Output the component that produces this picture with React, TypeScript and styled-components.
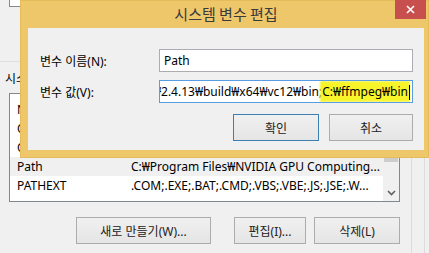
import React from "react"
import styled, { createGlobalStyle } from "styled-components"

const GlobalStyle = createGlobalStyle`
  html, body {
    margin: 0;
    padding: 0;
    background: #f0f0f0;
    overflow: hidden;
  }
  body {
    font-family: "Noto Sans", "Noto Sans CJK KR", sans-serif;
    font-size: 12px;
    color: #000;
  }
`

const Screen = styled.div`
  position: relative;
  width: 429px;
  height: 253px;
  overflow: hidden;
  display: flex;
  background: #f0f0f0;
`

const Window = styled.div`
  width: 412px;
  flex-shrink: 0;
  box-sizing: border-box;
  border-right: 1px solid #dcdcdc;
  padding: 0 11px 0 5px;
  display: flex;
  flex-direction: column;
`

const SideStrip = styled.div`
  width: 13px;
  flex-shrink: 0;
  box-sizing: border-box;
  border-right: 1px solid #dcdcdc;
`

const UserListTail = styled.div`
  margin-left: 4px;
  height: 7px;
  background: #fff;
  border: 1px solid #828790;
  border-top: none;
  box-sizing: border-box;
`

const Separator = styled.div`
  margin: 54px -5px 0 -5px;
  height: 1px;
  background: #dfdfdf;
`

const SectionLabel = styled.div`
  margin-top: 7px;
  height: 18px;
  line-height: 18px;
  font-family: "Noto Sans CJK KR", sans-serif;
`

const ListBox = styled.div`
  margin: 6px 0 0 4px;
  height: 109px;
  box-sizing: border-box;
  border: 1px solid #828790;
  background: #fff;
  display: flex;
`

const Rows = styled.div`
  flex: 1;
  padding-top: 6px;
  overflow: hidden;
`

const Row = styled.div<{ selected?: boolean }>`
  height: 19px;
  line-height: 19px;
  display: flex;
  white-space: nowrap;
  background: ${(p) => (p.selected ? "#f0f0f0" : "#fff")};
`

const NameCell = styled.div`
  width: 114px;
  padding-left: 7px;
  flex-shrink: 0;
`

const ValueCell = styled.div`
  flex: 1;
  overflow: hidden;
`

const ScrollBar = styled.div`
  width: 16px;
  background: #f0f0f0;
  display: flex;
  flex-direction: column;
`

const Track = styled.div`
  flex: 1;
`

const Thumb = styled.div`
  margin-top: 10px;
  height: 58px;
  margin-left: 1px;
  margin-right: 1px;
  background: #cdcdcd;
`

const ArrowButton = styled.div`
  height: 17px;
  display: flex;
  align-items: center;
  justify-content: center;
`

const ButtonRow = styled.div`
  margin-top: 15px;
  display: flex;
  justify-content: flex-end;
  gap: 8px;
`

const Button = styled.div<{ w: number; primary?: boolean }>`
  width: ${(p) => p.w}px;
  height: 27px;
  box-sizing: border-box;
  border: 1px solid ${(p) => (p.primary ? "#3c7fb1" : "#acacac")};
  background: linear-gradient(#f0f0f0, #e5e5e5);
  display: flex;
  align-items: center;
  justify-content: center;
  font-family: "Noto Sans", "Noto Sans CJK KR", sans-serif;
  color: #222;
`

const Dialog = styled.div`
  position: absolute;
  left: 20px;
  top: 0;
  width: 409px;
  height: 158px;
  box-sizing: border-box;
  background: #efc76b;
  padding: 0 5px 8px 8px;
  display: flex;
  flex-direction: column;
  box-shadow: 0 0 0 1px #e6bb59 inset;
`

const TitleBar = styled.div`
  position: relative;
  height: 28px;
  flex-shrink: 0;
  display: flex;
  align-items: center;
  justify-content: center;
`

const Title = styled.div`
  font-family: "Noto Sans CJK KR", sans-serif;
  font-size: 15px;
  color: #3a3a3a;
  margin-top: -2px;
`

const CloseButton = styled.div`
  position: absolute;
  right: -2px;
  top: 0;
  width: 31px;
  height: 19px;
  background: #c7504e;
  display: flex;
  align-items: center;
  justify-content: center;
`

const Content = styled.div`
  flex: 1;
  background: #f0f0f0;
  padding: 21px 11px 0 12px;
  display: flex;
  flex-direction: column;
`

const FieldRow = styled.div`
  display: flex;
  align-items: center;
  margin-bottom: 8px;
`

const FieldLabel = styled.div`
  width: 119px;
  flex-shrink: 0;
  font-family: "Noto Sans", "Noto Sans CJK KR", sans-serif;
`

const Input = styled.div<{ focused?: boolean }>`
  flex: 1;
  height: 23px;
  box-sizing: border-box;
  background: #fff;
  border: 1px solid ${(p) => (p.focused ? "#569de5" : "#abadb3")};
  display: flex;
  align-items: center;
  justify-content: ${(p) => (p.focused ? "flex-end" : "flex-start")};
  padding: 0 2px 0 4px;
  overflow: hidden;
  white-space: nowrap;
`

const Marked = styled.span`
  background: #f7f52a;
  box-shadow: 0 0 2px 2px #f7f52a;
`

const Caret = styled.span`
  display: inline-block;
  width: 1px;
  height: 15px;
  background: #000;
  vertical-align: middle;
  margin-left: 1px;
`

const DialogButtons = styled.div`
  display: flex;
  justify-content: flex-end;
  gap: 10px;
  margin-top: 3px;
`

const ChevronDown = () => (
  <svg width="9" height="6" viewBox="0 0 9 6">
    <path d="M1 1l3.5 3.5L8 1" fill="none" stroke="#606060" strokeWidth="1.6" />
  </svg>
)

const CloseIcon = () => (
  <svg width="9" height="9" viewBox="0 0 9 9">
    <path d="M1 1l7 7M8 1L1 8" stroke="#fff" strokeWidth="1.6" />
  </svg>
)

const rows = [
  { name: "NUMBER_OF_PROCESSORS", value: "4" },
  { name: "OPENCV_DIR", value: "C:₩opencv₩build" },
  { name: "OS", value: "Windows_NT" },
  { name: "Path", value: "C:₩Program Files₩NVIDIA GPU Computing...", selected: true },
  { name: "PATHEXT", value: ".COM;.EXE;.BAT;.CMD;.VBS;.VBE;.JS;.JSE;.W..." },
]

export default function App() {
  return (
    <Screen>
      <GlobalStyle />
      <Window>
        <UserListTail />
        <Separator />
        <SectionLabel>시스템 변수(S)</SectionLabel>
        <ListBox>
          <Rows>
            {rows.map((r) => (
              <Row key={r.name} selected={r.selected}>
                <NameCell>{r.name}</NameCell>
                <ValueCell>{r.value}</ValueCell>
              </Row>
            ))}
          </Rows>
          <ScrollBar>
            <Track>
              <Thumb />
            </Track>
            <ArrowButton>
              <ChevronDown />
            </ArrowButton>
          </ScrollBar>
        </ListBox>
        <ButtonRow>
          <Button w={135}>새로 만들기(W)...</Button>
          <Button w={72} style={{ marginLeft: 15 }}>편집(I)...</Button>
          <Button w={86}>삭제(L)</Button>
        </ButtonRow>
      </Window>
      <SideStrip />

      <Dialog>
        <TitleBar>
          <Title>시스템 변수 편집</Title>
          <CloseButton>
            <CloseIcon />
          </CloseButton>
        </TitleBar>
        <Content>
          <FieldRow>
            <FieldLabel>변수 이름(N):</FieldLabel>
            <Input>Path</Input>
          </FieldRow>
          <FieldRow>
            <FieldLabel>변수 값(V):</FieldLabel>
            <Input focused>
              <span>
                ;C:₩opencv₩2.4.13₩build₩x64₩vc12₩bin;<Marked>C:₩ffmpeg₩bin</Marked>
                <Caret />
              </span>
            </Input>
          </FieldRow>
          <DialogButtons>
            <Button w={86} primary>확인</Button>
            <Button w={84}>취소</Button>
          </DialogButtons>
        </Content>
      </Dialog>
    </Screen>
  )
}
